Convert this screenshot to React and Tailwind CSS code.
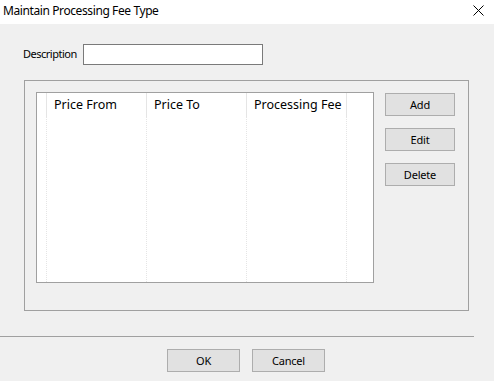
export default function App() {
  const cols = [
    { w: "w-[10px]", label: "" },
    { w: "w-[100px]", label: "Price From" },
    { w: "w-[100px]", label: "Price To" },
    { w: "w-[100px]", label: "Processing Fee" },
  ];

  const btn = "bg-[#e1e1e1] border border-[#adadad] text-[11px] tracking-[-0.2px] leading-none";

  return (
    <div
      className="w-[494px] h-[381px] bg-[#f0f0f0] flex flex-col text-[12px] text-black"
      style={{ fontFamily: '"Noto Sans", "Segoe UI", sans-serif' }}
    >
      {/* Title bar */}
      <div className="h-[24px] bg-white flex items-center justify-between pl-[3px] pr-[10px]">
        <span className="leading-none tracking-[-0.4px] mt-[-3px]">Maintain Processing Fee Type</span>
        <svg width="11" height="11" viewBox="0 0 11 11" className="mt-[-3px]">
          <path d="M0.5 0.5 L10.5 10.5 M10.5 0.5 L0.5 10.5" stroke="#000" strokeWidth="1" />
        </svg>
      </div>

      {/* Description */}
      <div className="flex items-center pl-[23px] mt-[20px] h-[21px]">
        <span className="w-[60px] text-[11px] tracking-[-0.5px]">Description</span>
        <div className="w-[180px] h-[21px] bg-white border border-[#7a7a7a]" />
      </div>

      {/* Group box */}
      <div className="ml-[24px] mt-[15px] w-[445px] h-[231px] border border-[#a0a0a0] flex pt-[11px] pl-[11px]">
        <div className="w-[338px] h-[191px] bg-white border border-[#a0a0a0] flex">
          {cols.map((c, i) => (
            <div key={i} className={`${c.w} flex flex-col`}>
              <div className="h-[23px] flex items-center pl-[7px] pt-[2px] shrink-0 text-[12.5px] border-r border-[#e5e5e5]">
                {c.label}
              </div>
              <div className="flex-1 border-r border-dotted border-[#e5e5e5]" />
            </div>
          ))}
        </div>
        <div className="flex flex-col gap-[12px] ml-[11px] mt-[1px]">
          <button className={`w-[70px] h-[23px] ${btn}`}>Add</button>
          <button className={`w-[70px] h-[23px] ${btn}`}>Edit</button>
          <button className={`w-[70px] h-[23px] ${btn}`}>Delete</button>
        </div>
      </div>

      {/* Separator */}
      <div className="mt-[25px] w-[474px] h-px bg-[#a0a0a0]" />

      {/* Footer buttons */}
      <div className="flex gap-[12px] pl-[167px] mt-[12px]">
        <button className={`w-[73px] h-[23px] ${btn}`}>OK</button>
        <button className={`w-[73px] h-[23px] ${btn}`}>Cancel</button>
      </div>
    </div>
  );
}
